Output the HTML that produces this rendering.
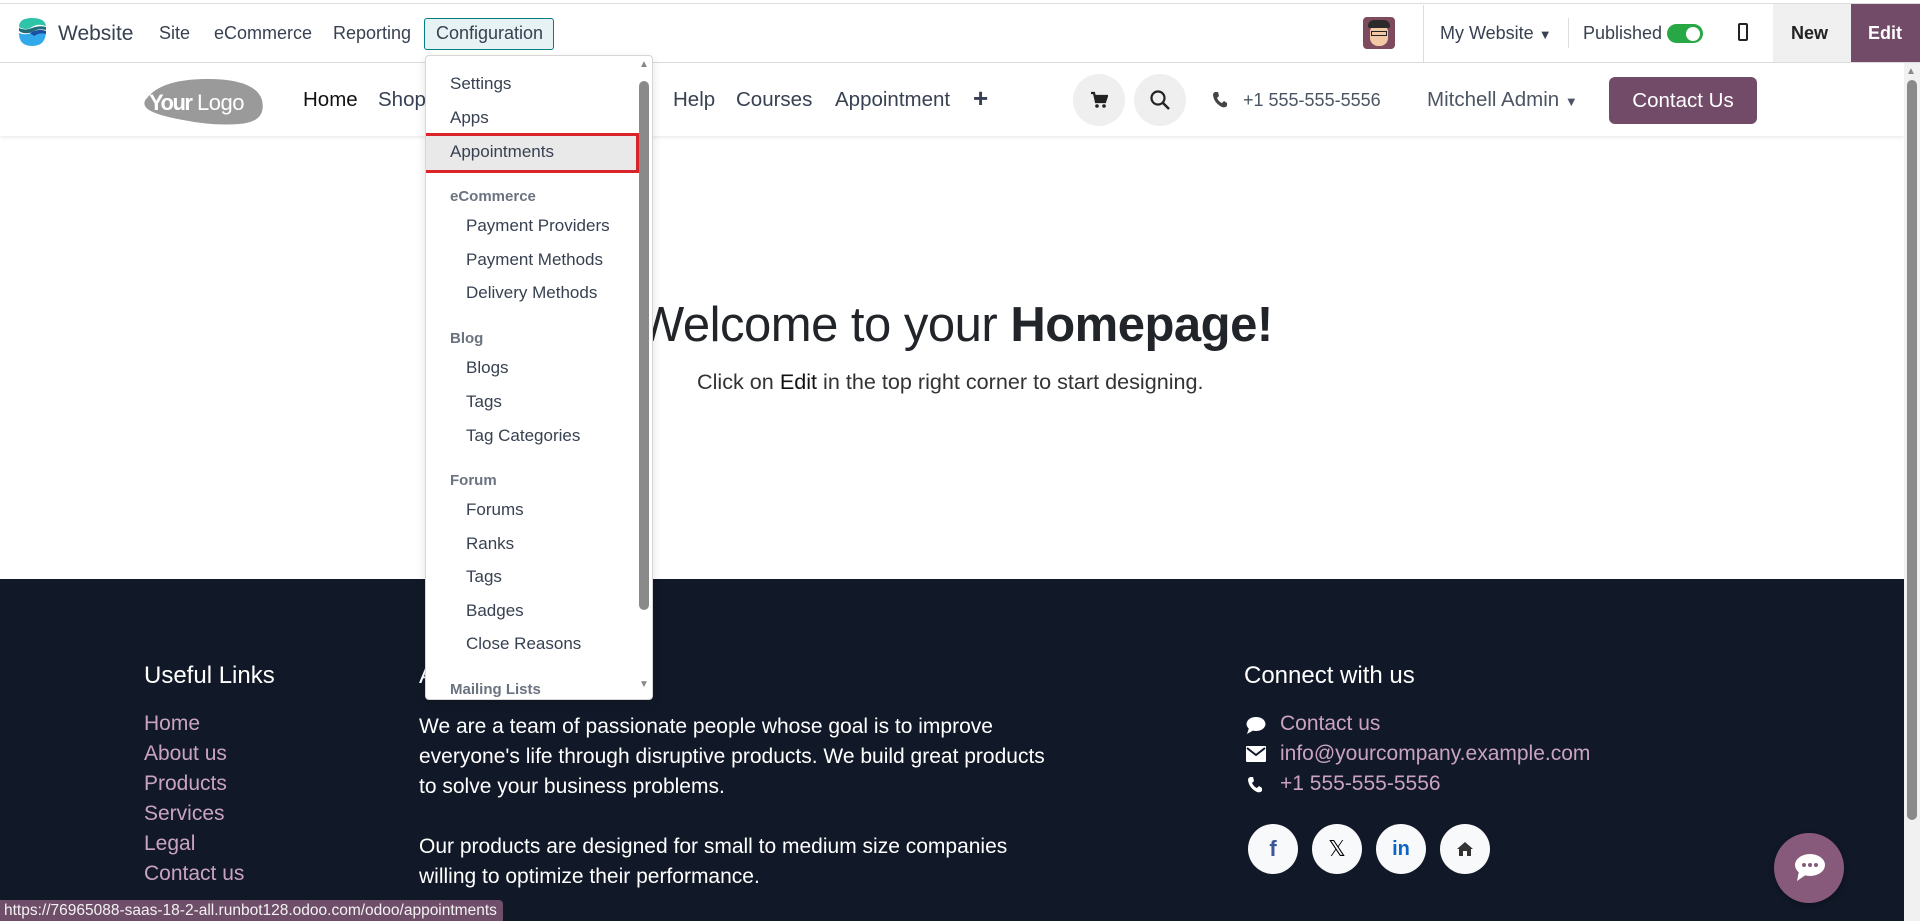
<!DOCTYPE html>
<html><head><meta charset="utf-8">
<style>
*{margin:0;padding:0;box-sizing:border-box}
body{width:1920px;height:921px;overflow:hidden;position:relative;background:#fff;font-family:"Liberation Sans",sans-serif;color:#212529}
.a{position:absolute;white-space:nowrap}
.top{position:absolute;left:0;top:3px;width:1920px;height:60px;border-top:1px solid #ddd;border-bottom:1px solid #dcdcdc;background:#fff}
.tm{font-size:18px;color:#374151;top:23px}
.nav2{position:absolute;left:0;top:63px;width:1904px;height:73px;background:#fff;box-shadow:0 2px 3px rgba(0,0,0,.07)}
.n2{font-size:20.5px;color:#374151;top:88px}
.circ{position:absolute;width:52px;height:52px;border-radius:50%;background:#efefef;top:74px}
.foot{position:absolute;left:0;top:579px;width:1904px;height:342px;background:#111827}
.fl{font-size:21px;color:#c9a3c0}
.fw{font-size:21px;color:#fff}
.soc{position:absolute;top:824px;width:50px;height:50px;border-radius:50%;background:#f8f9fa;display:flex;align-items:center;justify-content:center}
.dd{position:absolute;left:425px;top:55px;width:228px;height:645px;background:#fff;border:1px solid #d6d6d6;border-radius:4px;box-shadow:0 4px 10px rgba(0,0,0,.12);overflow:hidden}
.di{position:absolute;font-size:17px;color:#374151;white-space:nowrap}
.dh{position:absolute;font-size:15px;font-weight:bold;color:#6b7280;white-space:nowrap}
</style></head><body>

<div class="top"></div>
<svg class="a" style="left:16px;top:17px" width="33" height="30" viewBox="0 0 33 30">
<path d="M3 10 Q3 1 16 1 Q29 1 30 9 Q22 6 16 10 Q10 14 3 10Z" fill="#2ec4a8"/>
<path d="M3 11 Q9 14 16 11 Q24 8 30 10 L30 13 Q22 11 16 15 Q9 18 3 14Z" fill="#1e6b7a"/>
<path d="M3 16 Q10 19 17 15 Q24 12 30 14 Q30 29 16 29 Q3 29 3 16Z" fill="#31a9ea"/>
<path d="M14 16 Q22 11 30 14 L30 17 Q24 15 18 19Z" fill="#1d4fa0"/>
</svg>
<div class="a" style="left:58px;top:22px;font-size:21px;color:#374151">Website</div>
<div class="a tm" style="left:159px">Site</div>
<div class="a tm" style="left:214px">eCommerce</div>
<div class="a tm" style="left:333px">Reporting</div>
<div class="a" style="left:424px;top:18px;width:130px;height:32px;background:#e6f2f3;border:1px solid #017e84;border-radius:3px"></div>
<div class="a tm" style="left:436px">Configuration</div>
<div class="a" style="left:1363px;top:17px;width:32px;height:32px;border-radius:4px;background:#7d4a5e;overflow:hidden">
<div class="a" style="left:7px;top:7px;width:18px;height:22px;border-radius:8px;background:#f1c9a5"></div>
<div class="a" style="left:5px;top:3px;width:22px;height:8px;border-radius:6px 6px 2px 2px;background:#2b2b2b"></div>
<div class="a" style="left:8px;top:14px;width:16px;height:5px;border:1.5px solid #222"></div>
</div>
<div class="a" style="left:1423px;top:5px;width:1px;height:57px;background:#ddd"></div>
<div class="a tm" style="left:1440px">My Website <span style="font-size:13px">▼</span></div>
<div class="a" style="left:1568px;top:18px;width:1px;height:30px;background:#ddd"></div>
<div class="a tm" style="left:1583px">Published</div>
<div class="a" style="left:1667px;top:24px;width:36px;height:19px;border-radius:10px;background:#28a745"><div class="a" style="left:19px;top:2.5px;width:14px;height:14px;border-radius:50%;background:#fff"></div></div>
<div class="a" style="left:1738px;top:23px;width:10px;height:18px;border:2px solid #222;border-radius:2px"></div>
<div class="a" style="left:1773px;top:4px;width:78px;height:58px;background:#f0f0f0"></div>
<div class="a" style="left:1791px;top:23px;font-size:18px;font-weight:bold;color:#222">New</div>
<div class="a" style="left:1851px;top:4px;width:69px;height:58px;background:#714b67"></div>
<div class="a" style="left:1868px;top:23px;font-size:18px;font-weight:bold;color:#fff">Edit</div>

<div class="nav2"></div>
<svg class="a" style="left:143px;top:76px" width="122" height="52" viewBox="0 0 122 52">
<path d="M4 22 Q18 4 60 3 Q112 2 119 24 Q124 46 96 48 Q70 50 40 44 Q6 38 2 30 Q0 26 4 22Z" fill="#9a9a9a"/>
<text x="6" y="34" font-family="Liberation Sans" font-weight="bold" font-size="22" fill="#fff" letter-spacing="-1.5">Your</text>
<text x="54" y="34" font-family="Liberation Sans" font-size="22" fill="#fff" letter-spacing="-0.5">Logo</text>
</svg>
<div class="a n2" style="left:303px;color:#111">Home</div>
<div class="a n2" style="left:378px">Shop</div>
<div class="a n2" style="left:673px">Help</div>
<div class="a n2" style="left:736px">Courses</div>
<div class="a n2" style="left:835px">Appointment</div>
<div class="a" style="left:973px;top:83px;font-size:26px;font-weight:bold;color:#374151">+</div>
<div class="circ" style="left:1073px"></div>
<svg class="a" style="left:1090px;top:91px" width="18" height="18" viewBox="0 0 18 18"><path d="M1 2h3l2 9h9l2-6H5" fill="none" stroke="#222" stroke-width="2.2"/><rect x="5" y="5" width="11" height="5" fill="#222"/><circle cx="7" cy="15" r="1.8" fill="#222"/><circle cx="14" cy="15" r="1.8" fill="#222"/></svg>
<div class="circ" style="left:1134px"></div>
<svg class="a" style="left:1149px;top:89px" width="22" height="22" viewBox="0 0 22 22"><circle cx="9" cy="9" r="6.5" fill="none" stroke="#222" stroke-width="2.2"/><path d="M14 14l6 6" stroke="#222" stroke-width="2.5"/></svg>
<svg class="a" style="left:1212px;top:91px" width="16" height="17" viewBox="0 0 16 17"><path d="M3 1 L6 1 L7 5 L5 7 Q7 11 10 12 L12 10 L15 12 L15 15 Q13 17 10 16 Q2 12 1 4 Q1 2 3 1Z" fill="#444"/></svg>
<div class="a" style="left:1243px;top:90px;font-size:18px;color:#4b5563">+1 555-555-5556</div>
<div class="a n2" style="left:1427px;color:#4b5563">Mitchell Admin <span style="font-size:13px">▼</span></div>
<div class="a" style="left:1609px;top:77px;width:148px;height:47px;background:#714b67;border-radius:6px;color:#fff;font-size:20.5px;text-align:center;line-height:47px">Contact Us</div>

<div class="a" style="left:1904px;top:63px;width:16px;height:858px;background:#f1f1f1"></div>
<div class="a" style="left:1907px;top:80px;width:10px;height:740px;border-radius:5px;background:#8a8a8a"></div>
<div class="a" style="left:1906px;top:66px;font-size:10px;color:#888">▲</div>

<div class="a" style="left:638px;top:297px;font-size:49px;color:#212529;letter-spacing:-0.5px">Welcome to your <b>Homepage!</b></div>
<div class="a" style="left:697px;top:369px;font-size:21.6px;color:#333">Click on <span style="color:#111">Edit</span> in the top right corner to start designing.</div>

<div class="foot"></div>
<div class="a fw" style="left:144px;top:662px;font-size:24px">Useful Links</div>
<div class="a fw" style="left:419px;top:662px;font-size:24px">About us</div>
<div class="a fw" style="left:1244px;top:662px;font-size:24px">Connect with us</div>
<div class="a fl" style="left:144px;top:712px">Home</div>
<div class="a fl" style="left:144px;top:742px">About us</div>
<div class="a fl" style="left:144px;top:772px">Products</div>
<div class="a fl" style="left:144px;top:802px">Services</div>
<div class="a fl" style="left:144px;top:832px">Legal</div>
<div class="a fl" style="left:144px;top:862px">Contact us</div>
<div class="a fw" style="left:419px;top:712px;line-height:30px">We are a team of passionate people whose goal is to improve<br>everyone's life through disruptive products. We build great products<br>to solve your business problems.<br><br>Our products are designed for small to medium size companies<br>willing to optimize their performance.</div>
<svg class="a" style="left:1246px;top:716px" width="20" height="18" viewBox="0 0 20 18"><ellipse cx="10" cy="8" rx="9.5" ry="7" fill="#fff"/><path d="M3 12 L1 18 L8 14Z" fill="#fff"/></svg>
<div class="a fl" style="left:1280px;top:712px">Contact us</div>
<svg class="a" style="left:1246px;top:746px" width="20" height="16" viewBox="0 0 20 16"><rect x="0" y="0" width="20" height="16" rx="1" fill="#fff"/><path d="M1 2 L10 9 L19 2" fill="none" stroke="#111827" stroke-width="2"/></svg>
<div class="a fl" style="left:1280px;top:742px">info@yourcompany.example.com</div>
<svg class="a" style="left:1247px;top:776px" width="16" height="17" viewBox="0 0 16 17"><path d="M3 1 L6 1 L7 5 L5 7 Q7 11 10 12 L12 10 L15 12 L15 15 Q13 17 10 16 Q2 12 1 4 Q1 2 3 1Z" fill="#fff"/></svg>
<div class="a fl" style="left:1280px;top:772px">+1 555-555-5556</div>
<div class="soc" style="left:1248px"><span style="font-size:22px;font-weight:bold;color:#3b5998">f</span></div>
<div class="soc" style="left:1312px"><span style="font-size:22px;color:#000">𝕏</span></div>
<div class="soc" style="left:1376px"><span style="font-size:20px;font-weight:bold;color:#0a66c2">in</span></div>
<div class="soc" style="left:1440px"><svg width="18" height="16" viewBox="0 0 18 16"><path d="M9 1 L17 8 L15 8 L15 15 L11 15 L11 10 L7 10 L7 15 L3 15 L3 8 L1 8Z" fill="#333"/></svg></div>
<div class="a" style="left:1774px;top:833px;width:70px;height:70px;border-radius:50%;background:#875a7b;box-shadow:0 2px 6px rgba(0,0,0,.3)"></div>
<svg class="a" style="left:1794px;top:853px" width="32" height="30" viewBox="0 0 32 30"><ellipse cx="16" cy="12" rx="15" ry="11" fill="#fff"/><path d="M5 18 L3 28 L13 21Z" fill="#fff"/><circle cx="10" cy="12" r="2" fill="#875a7b"/><circle cx="16" cy="12" r="2" fill="#875a7b"/><circle cx="22" cy="12" r="2" fill="#875a7b"/></svg>

<div class="a" style="left:0;top:900px;width:503px;height:21px;background:#6f4e69;border-radius:0 4px 0 0;color:#f2f2f2;font-size:15.5px;padding:2px 4px">https://76965088-saas-18-2-all.runbot128.odoo.com/odoo/appointments</div>

<div class="dd">
<div class="a" style="left:213px;top:3px;font-size:10px;color:#888">▲</div>
<div class="a" style="left:213px;top:623px;font-size:10px;color:#888">▼</div>
<div class="a" style="left:213px;top:25px;width:10px;height:529px;border-radius:5px;background:#8a8a8a"></div>
<div class="di" style="left:24px;top:18px">Settings</div>
<div class="di" style="left:24px;top:52px">Apps</div>
<div class="a" style="left:-3px;top:77px;width:216px;height:40px;background:#e9e9e9;border:3px solid #d9252a"></div>
<div class="di" style="left:24px;top:86px">Appointments</div>
<div class="dh" style="left:24px;top:132px">eCommerce</div>
<div class="di" style="left:40px;top:160px">Payment Providers</div>
<div class="di" style="left:40px;top:194px">Payment Methods</div>
<div class="di" style="left:40px;top:227px">Delivery Methods</div>
<div class="dh" style="left:24px;top:274px">Blog</div>
<div class="di" style="left:40px;top:302px">Blogs</div>
<div class="di" style="left:40px;top:336px">Tags</div>
<div class="di" style="left:40px;top:370px">Tag Categories</div>
<div class="dh" style="left:24px;top:416px">Forum</div>
<div class="di" style="left:40px;top:444px">Forums</div>
<div class="di" style="left:40px;top:478px">Ranks</div>
<div class="di" style="left:40px;top:511px">Tags</div>
<div class="di" style="left:40px;top:545px">Badges</div>
<div class="di" style="left:40px;top:578px">Close Reasons</div>
<div class="dh" style="left:24px;top:625px">Mailing Lists</div>
</div>
</body></html>
